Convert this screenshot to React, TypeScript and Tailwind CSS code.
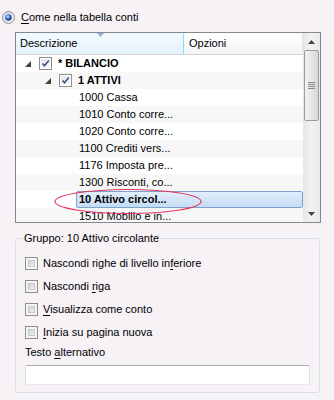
import React from "react";

const font = { fontFamily: '"Liberation Sans", Arial, sans-serif' };

function Expander() {
  return (
    <svg width="6" height="6" viewBox="0 0 6 6" className="shrink-0">
      <polygon points="6,0 6,6 0,6" fill="#404040" />
    </svg>
  );
}

function TreeCheck() {
  return (
    <div className="w-[13px] h-[13px] border border-[#8f8f8f] bg-white p-[1px] shrink-0">
      <div className="w-full h-full bg-gradient-to-br from-[#e4e6ea] to-[#fbfbfb] relative">
        <svg width="11" height="11" viewBox="0 0 11 11" className="absolute -top-[1px] -left-[1px]">
          <path d="M2.5 5.5 L4.5 7.8 L8.8 2.5" stroke="#3d568a" strokeWidth="1.7" fill="none" />
        </svg>
      </div>
    </div>
  );
}

function Check() {
  return (
    <div className="w-[13px] h-[13px] border border-[#8e8f8f] bg-[#f4f4f4] p-[2px] shrink-0">
      <div className="w-full h-full bg-gradient-to-br from-[#cdd0d5] to-[#f2f2f2] border border-[#c6c9ce]" />
    </div>
  );
}

type Row = { text: string; level: number; bold?: boolean; selected?: boolean };

const rows: Row[] = [
  { text: "* BILANCIO", level: 0, bold: true },
  { text: "1 ATTIVI", level: 1, bold: true },
  { text: "1000 Cassa", level: 2 },
  { text: "1010 Conto corre...", level: 2 },
  { text: "1020 Conto corre...", level: 2 },
  { text: "1100 Crediti vers...", level: 2 },
  { text: "1176 Imposta pre...", level: 2 },
  { text: "1300 Risconti, co...", level: 2 },
  { text: "10 Attivo circol...", level: 2, bold: true, selected: true },
  { text: "1510 Mobilio e in...", level: 2 },
];

function TreeRow({ row, index }: { row: Row; index: number }) {
  const alt = index % 2 === 1;
  return (
    <div className={`h-[17px] shrink-0 flex items-center ${alt ? "bg-[#f7f7f7]" : "bg-white"}`}>
      {row.level === 0 && (
        <div className="flex items-center">
          <div className="w-[9px]" />
          <Expander />
          <div className="w-[8px]" />
          <TreeCheck />
          <span className="ml-[6px] font-bold">{row.text}</span>
        </div>
      )}
      {row.level === 1 && (
        <div className="flex items-center">
          <div className="w-[29px]" />
          <Expander />
          <div className="w-[8px]" />
          <TreeCheck />
          <span className="ml-[6px] font-bold">{row.text}</span>
        </div>
      )}
      {row.level === 2 && !row.selected && <span className="ml-[63px]">{row.text}</span>}
      {row.selected && (
        <div className="ml-[60px] flex-1 h-[17px] flex items-center px-[2px] rounded-[2px] border border-[#7da2ce] bg-gradient-to-b from-[#e2eefb] to-[#c4dcf5] font-bold">
          {row.text}
        </div>
      )}
    </div>
  );
}

function Scrollbar() {
  return (
    <div className="w-[17px] flex flex-col bg-gradient-to-r from-[#e6e6e8] via-[#f2f2f2] to-[#e9e9eb] shrink-0">
      <div className="h-[17px] flex items-center justify-center">
        <svg width="7" height="4" viewBox="0 0 7 4">
          <polygon points="3.5,0 7,4 0,4" fill="#404040" />
        </svg>
      </div>
      <div className="mx-[1px] h-[71px] rounded-[2px] border border-[#9c9c9c] bg-gradient-to-r from-[#f3f3f3] via-[#e6e6e6] to-[#d6d6d6] flex flex-col items-center justify-center gap-[1px]">
        <div className="w-[7px] h-[1px] bg-[#8a8a8a]" />
        <div className="w-[7px] h-[1px] bg-[#8a8a8a]" />
        <div className="w-[7px] h-[1px] bg-[#8a8a8a]" />
        <div className="w-[7px] h-[1px] bg-[#8a8a8a]" />
      </div>
      <div className="flex-1" />
      <div className="h-[17px] flex items-center justify-center">
        <svg width="7" height="4" viewBox="0 0 7 4">
          <polygon points="0,0 7,0 3.5,4" fill="#404040" />
        </svg>
      </div>
    </div>
  );
}

export default function App() {
  return (
    <div className="w-[334px] h-[400px] bg-[#f6f2f6] text-[11px] text-black relative overflow-hidden" style={font}>
      <div className="h-[15px] mt-[10px] ml-[2px] flex items-center">
        <svg width="13" height="13" viewBox="0 0 13 13" className="shrink-0">
          <defs>
            <radialGradient id="rb" cx="0.4" cy="0.35" r="0.7">
              <stop offset="0" stopColor="#dff2ff" />
              <stop offset="0.5" stopColor="#2a6ad0" />
              <stop offset="1" stopColor="#163c8c" />
            </radialGradient>
            <linearGradient id="rg" x1="0" y1="0" x2="1" y2="1">
              <stop offset="0" stopColor="#d2d5da" />
              <stop offset="1" stopColor="#f8f8f8" />
            </linearGradient>
          </defs>
          <circle cx="6.5" cy="6.5" r="6" fill="url(#rg)" stroke="#8e8f8f" />
          <circle cx="6.5" cy="6.5" r="3.2" fill="url(#rb)" />
        </svg>
        <span className="ml-[6px]">
          <span className="underline underline-offset-2">C</span>ome nella tabella conti
        </span>
      </div>

      <div className="mt-[7px] ml-[15px] w-[306px] h-[191px] border border-[#828790] bg-white flex overflow-hidden">
        <div className="flex-1 flex flex-col overflow-hidden">
          <div className="h-[22px] shrink-0 flex border-b border-[#d5d5d5]">
            <div className="w-[168px] relative flex items-center pl-[4px] border-r border-[#96d9f9] bg-gradient-to-b from-[#f3fafe] to-[#e3f2fb]">
              <svg width="7" height="4" viewBox="0 0 7 4" className="absolute top-0 left-[81px]">
                <polygon points="0,0 7,0 3.5,4" fill="#8fb6d6" />
              </svg>
              Descrizione
            </div>
            <div className="flex-1 flex items-center pl-[5px] border-r border-[#e3e5e8] bg-gradient-to-b from-white to-[#f3f4f6]">
              Opzioni
            </div>
          </div>
          {rows.map((r, i) => (
            <TreeRow key={i} row={r} index={i} />
          ))}
        </div>
        <Scrollbar />
      </div>

      <svg width="150" height="28" viewBox="0 0 150 28" className="absolute left-[54px] top-[188px]">
        <ellipse cx="74" cy="13.5" rx="73" ry="12" fill="none" stroke="#e5355c" strokeWidth="1.2" />
      </svg>

      <fieldset className="mt-[9px] ml-[15px] w-[305px] border border-[#d5dfe5] rounded-[3px] px-[9px] pb-[7px]">
        <legend className="leading-[13px] px-[1px] -ml-[2px]">Gruppo: 10 Attivo circolante</legend>
        <div className="pt-[7px]">
          <div className="h-[23px] flex items-center gap-[5px]">
            <Check />
            <span>
              Nascondi righe di livello in<span className="underline underline-offset-2">f</span>eriore
            </span>
          </div>
          <div className="h-[23px] flex items-center gap-[5px]">
            <Check />
            <span>
              Nascondi <span className="underline underline-offset-2">r</span>iga
            </span>
          </div>
          <div className="h-[23px] flex items-center gap-[5px]">
            <Check />
            <span>
              <span className="underline underline-offset-2">V</span>isualizza come conto
            </span>
          </div>
          <div className="h-[23px] flex items-center gap-[5px]">
            <Check />
            <span>
              <span className="underline underline-offset-2">I</span>nizia su pagina nuova
            </span>
          </div>
          <div className="h-[15px] mt-[1px] flex items-center">
            <span>
              Testo <span className="underline underline-offset-2">a</span>lternativo
            </span>
          </div>
          <div className="mt-[5px] h-[20px] w-[285px] bg-white rounded-[2px] border border-[#dbdfe6] border-t-[#abadb3] border-b-[#e3e9ef]" />
        </div>
      </fieldset>
    </div>
  );
}
